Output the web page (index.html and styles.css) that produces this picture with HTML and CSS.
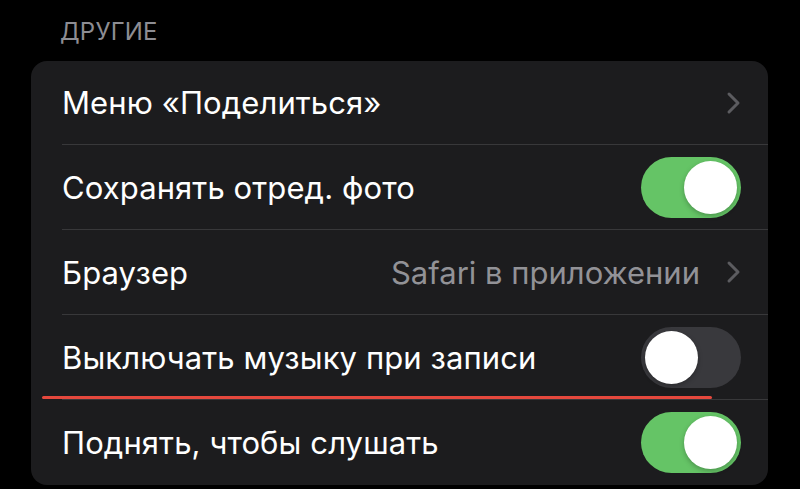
FILE: index.html
```html
<!DOCTYPE html>
<html lang="ru">
<head>
  <meta charset="UTF-8">
  <title>Другие</title>
  <link rel="stylesheet" href="styles.css">
</head>
<body>
  <div class="settings">
    <div class="section-title">ДРУГИЕ</div>
    <div class="group">
      <div class="row">
        <div class="row-inner">
          <span class="label">Меню «Поделиться»</span>
          <span class="chevron"><svg width="15" height="24" viewBox="0 0 15 24"><path d="M3 3 L12 12 L3 21" fill="none" stroke="#5c5c60" stroke-width="3" stroke-linecap="round" stroke-linejoin="round"/></svg></span>
        </div>
      </div>
      <div class="row">
        <div class="row-inner">
          <span class="label">Сохранять отред. фото</span>
          <span class="toggle on"><span class="knob"></span></span>
        </div>
      </div>
      <div class="row">
        <div class="row-inner">
          <span class="label">Браузер</span>
          <span class="value">Safari в приложении</span>
          <span class="chevron"><svg width="15" height="24" viewBox="0 0 15 24"><path d="M3 3 L12 12 L3 21" fill="none" stroke="#5c5c60" stroke-width="3" stroke-linecap="round" stroke-linejoin="round"/></svg></span>
        </div>
      </div>
      <div class="row marked">
        <div class="row-inner">
          <span class="label">Выключать музыку при записи</span>
          <span class="toggle"><span class="knob"></span></span>
        </div>
        <div class="underline"></div>
      </div>
      <div class="row">
        <div class="row-inner">
          <span class="label">Поднять, чтобы слушать</span>
          <span class="toggle on"><span class="knob"></span></span>
        </div>
      </div>
    </div>
  </div>
</body>
</html>
```

FILE: styles.css
```css
body {
  background: #000;
  margin: 0;
  padding: 0;
  font-family: 'Inter', 'Roboto', Arial, sans-serif;
  color: #fff;
}
.settings {
  padding: 0 32px 0 31px;
}
.section-title {
  height: 61px;
  box-sizing: border-box;
  padding: 18px 0 0 29px;
  font-size: 24px;
  line-height: 28px;
  color: #8d8d93;
  letter-spacing: 0.2px;
}
.group {
  background: #1c1c1e;
  border-radius: 16px;
  overflow: hidden;
  height: 424px;
}
.row {
  position: relative;
  padding-left: 31px;
  height: 85px;
}
.row:first-child {
  height: 84px;
}
.row-inner {
  height: 100%;
  display: flex;
  align-items: center;
  padding-right: 27px;
  border-bottom: 1px solid #38383a;
  box-sizing: border-box;
}
.row:last-child .row-inner {
  border-bottom: none;
}
.label {
  flex: 1;
  font-size: 31px;
  letter-spacing: 0.1px;
}
.value {
  font-size: 31px;
  color: #929297;
  margin-right: 26px;
}
.chevron {
  display: flex;
  width: 15px;
}
.toggle {
  width: 100px;
  height: 61px;
  border-radius: 31px;
  background: #39393d;
  display: flex;
  align-items: center;
  padding: 0 4px;
  box-sizing: border-box;
}
.toggle.on {
  background: #65c466;
  justify-content: flex-end;
}
.knob {
  width: 53px;
  height: 53px;
  border-radius: 50%;
  background: #fff;
  box-shadow: 0 2px 5px rgba(0,0,0,0.25);
}
/* красная пометка */
.marked .underline {
  position: absolute;
  left: 11px;
  top: 81px;
  width: 670px;
  height: 3px;
  border-radius: 2px;
  background: #e5483d;
}
```
